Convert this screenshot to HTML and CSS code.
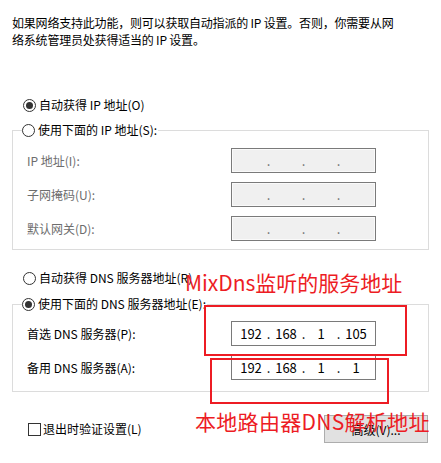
FILE: index.html
```html
<!DOCTYPE html>
<html lang="zh-CN">
<head>
<meta charset="utf-8">
<link rel="stylesheet" href="styles.css">
</head>
<body>
<div class="page">
  <p class="desc">如果网络支持此功能，则可以获取自动指派的 IP 设置。否则，你需要从网<br>络系统管理员处获得适当的 IP 设置。</p>

  <div class="radio-row first">
    <span class="radio checked"></span><span class="label">自动获得 IP 地址(O)</span>
  </div>

  <fieldset class="group ip-group">
    <legend class="legend"><span class="radio"></span><span class="label">使用下面的 IP 地址(S):</span></legend>
    <div class="rows">
      <span class="field-label disabled">IP 地址(I):</span>
      <div class="ipbox disabled"><span></span><i>.</i><span></span><i>.</i><span></span><i>.</i><span></span></div>
      <span class="field-label disabled">子网掩码(U):</span>
      <div class="ipbox disabled"><span></span><i>.</i><span></span><i>.</i><span></span><i>.</i><span></span></div>
      <span class="field-label disabled">默认网关(D):</span>
      <div class="ipbox disabled"><span></span><i>.</i><span></span><i>.</i><span></span><i>.</i><span></span></div>
    </div>
  </fieldset>

  <div class="radio-row dns-auto">
    <span class="radio"></span><span class="label">自动获得 DNS 服务器地址(R)</span>
  </div>

  <fieldset class="group dns-group">
    <legend class="legend"><span class="radio checked"></span><span class="label">使用下面的 DNS 服务器地址(E):</span></legend>
    <div class="rows">
      <span class="field-label">首选 DNS 服务器(P):</span>
      <div class="ipbox"><span>192</span><i>.</i><span>168</span><i>.</i><span>1</span><i>.</i><span>105</span></div>
      <span class="field-label">备用 DNS 服务器(A):</span>
      <div class="ipbox"><span>192</span><i>.</i><span>168</span><i>.</i><span>1</span><i>.</i><span>1</span></div>
    </div>
  </fieldset>

  <div class="bottom">
    <label class="check-row"><span class="checkbox"></span><span class="label">退出时验证设置(L)</span></label>
    <button class="btn">高级(V)...</button>
  </div>

  <div class="note note-1">MixDns监听的服务地址</div>
  <div class="mark mark-1"></div>
  <div class="mark mark-2"></div>
  <div class="note note-2">本地路由器DNS解析地址</div>
</div>
</body>
</html>
```

FILE: styles.css
```css
* { box-sizing: border-box; }
html, body { margin: 0; padding: 0; background: #fff; }
body {
  font-family: "Noto Sans CJK SC", "Noto Sans", sans-serif;
  font-size: 12px;
  color: #000;
}
.page {
  position: relative;
  width: 441px;
  height: 463px;
  overflow: hidden;
}
.desc {
  margin: 0;
  padding: 14px 12px 0;
  line-height: 17px;
  white-space: nowrap;
  letter-spacing: -0.2px;
}
.radio-row {
  display: flex;
  align-items: center;
  height: 16px;
  padding-left: 23px;
}
.radio-row.first { margin-top: 49px; }
.radio-row.dns-auto { margin-top: 20px; }
.radio {
  width: 13px;
  height: 13px;
  border: 1px solid #333;
  border-radius: 50%;
  background: #fff;
  display: inline-flex;
  align-items: center;
  justify-content: center;
  flex: none;
}
.radio.checked::after {
  content: "";
  width: 7px;
  height: 7px;
  border-radius: 50%;
  background: #333;
}
.label { margin-left: 3px; line-height: 16px; }
.group {
  margin: 0 12px;
  padding: 0 0 0 14px;
  border: 1px solid #dcdcdc;
  min-width: 0;
}
.ip-group { margin-top: 9px; padding-top: 10px; padding-bottom: 8px; }
.dns-group { margin-top: 10px; padding-top: 9px; padding-bottom: 11px; }
.legend {
  display: flex;
  align-items: center;
  height: 16px;
  padding: 0 1px 0 0;
  margin-left: -5px;
  background: #fff;
}
.rows {
  display: grid;
  grid-template-columns: 204px 145px;
  row-gap: 9px;
  align-items: center;
}
.field-label { line-height: 16px; }
.field-label.disabled { color: #6d6d6d; }
.ipbox {
  height: 25px;
  border: 1px solid #7a7a7a;
  background: #fff;
  display: grid;
  grid-template-columns: 30px 5px 30px 5px 30px 5px 30px;
  align-items: center;
  padding-left: 4px;
  font-size: 13px;
}
.ipbox.disabled { background: #f0f0f0; box-shadow: inset 0 0 0 1px #fafafa; color: #6d6d6d; }
.ipbox span { text-align: center; }
.ipbox i { font-style: normal; text-align: center; }
.bottom {
  margin: 23px 13px 0 28px;
  display: flex;
  align-items: center;
  justify-content: space-between;
  height: 28px;
}
.check-row { display: flex; align-items: center; }
.checkbox {
  width: 13px;
  height: 13px;
  border: 1px solid #333;
  background: #fff;
  flex: none;
}
.check-row .label { margin-left: 2px; }
.btn {
  width: 104px;
  height: 28px;
  background: #e1e1e1;
  border: 1px solid #adadad;
  font-family: inherit;
  font-size: 12px;
  color: #000;
  padding: 0;
}
.note {
  position: absolute;
  color: #ed1c24;
  line-height: 1;
  white-space: nowrap;
}
.note-1 { left: 185px; top: 272px; font-size: 21px; }
.note-2 { left: 195px; top: 411px; font-size: 21px; letter-spacing: 0.3px; }
.mark {
  position: absolute;
  border: 2px solid #ed1c24;
}
.mark-1 { left: 204px; top: 305px; width: 203px; height: 51px; }
.mark-2 { left: 210px; top: 358px; width: 179px; height: 46px; }
```
